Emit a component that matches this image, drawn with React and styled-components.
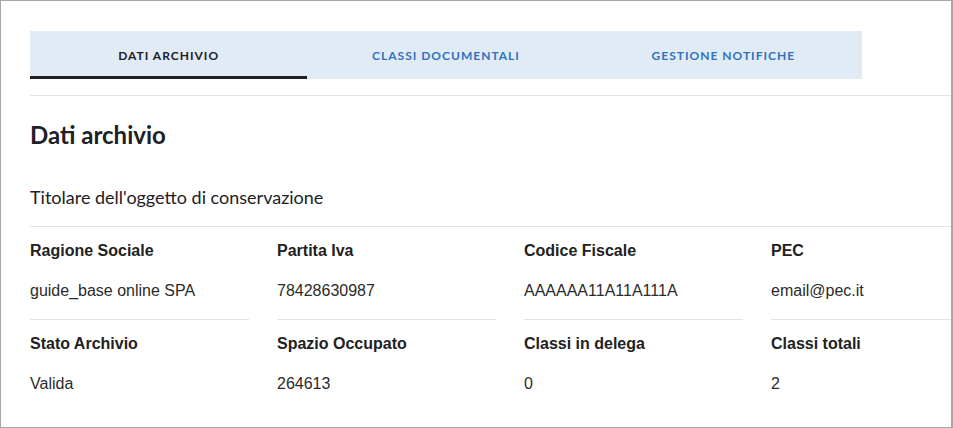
import React from "react";
import styled, { createGlobalStyle } from "styled-components";

const GlobalStyle = createGlobalStyle`
  html, body {
    margin: 0;
    padding: 0;
    background: #fff;
  }
`;

const Frame = styled.div`
  box-sizing: border-box;
  width: 953px;
  height: 428px;
  border: 1px solid #a6a6a6;
  border-right-width: 2px;
  overflow: hidden;
  padding: 30px 0 0 29px;
  background: #fff;
`;

const TabBar = styled.div`
  display: flex;
  width: 832px;
  height: 48px;
  background: #e1ebf5;
`;

const Tab = styled.button`
  flex: 1;
  box-sizing: border-box;
  height: 48px;
  border: 0;
  padding: 3px 0 0;
  background: transparent;
  border-bottom: 3px solid ${(p) => (p.$active ? "#1d2025" : "transparent")};
  font-family: Lato, "Noto Sans", sans-serif;
  font-weight: 700;
  font-size: 12px;
  letter-spacing: 1px;
  text-transform: uppercase;
  color: ${(p) => (p.$active ? "#1d2025" : "#2f72c2")};
  cursor: pointer;
`;

const Divider = styled.div`
  height: 1px;
  background: #e3e3e3;
  margin-top: ${(p) => p.$top || 0}px;
`;

const Heading = styled.h2`
  margin: 24px 0 0;
  font-family: Lato, "Noto Sans", sans-serif;
  font-weight: 700;
  font-size: 24px;
  line-height: 30px;
  color: #1d2025;
`;

const Subtitle = styled.div`
  margin-top: 35px;
  font-family: Lato, "Noto Sans", sans-serif;
  font-size: 18px;
  line-height: 24px;
  color: #1d2025;
`;

const Grid = styled.div`
  display: grid;
  grid-template-columns: repeat(4, 219px);
  column-gap: 28px;
`;

const Cell = styled.div`
  box-sizing: border-box;
  height: 93px;
  padding-top: 14px;
  border-bottom: 1px solid ${(p) => (p.$lined ? "#e3e3e3" : "transparent")};
  font-family: "Liberation Sans", Arial, sans-serif;
  font-size: 16px;
  line-height: 20px;
`;

const Label = styled.div`
  font-weight: 700;
  color: #222;
`;

const Value = styled.div`
  margin-top: 20px;
  color: #2b2b2b;
`;

const rows = [
  [
    ["Ragione Sociale", "guide_base online SPA"],
    ["Partita Iva", "78428630987"],
    ["Codice Fiscale", "AAAAAA11A11A111A"],
    ["PEC", "email@pec.it"],
  ],
  [
    ["Stato Archivio", "Valida"],
    ["Spazio Occupato", "264613"],
    ["Classi in delega", "0"],
    ["Classi totali", "2"],
  ],
];

const tabs = ["Dati archivio", "Classi documentali", "Gestione notifiche"];

export default function App() {
  return (
    <>
      <GlobalStyle />
      <Frame>
        <TabBar>
          {tabs.map((t, i) => (
            <Tab key={t} $active={i === 0}>
              {t}
            </Tab>
          ))}
        </TabBar>
        <Divider $top={16} />
        <Heading>Dati archivio</Heading>
        <Subtitle>Titolare dell'oggetto di conservazione</Subtitle>
        <Divider $top={17} />
        <Grid>
          {rows.map((row, r) =>
            row.map(([label, value]) => (
              <Cell key={label} $lined={r === 0}>
                <Label>{label}</Label>
                <Value>{value}</Value>
              </Cell>
            ))
          )}
        </Grid>
      </Frame>
    </>
  );
}
